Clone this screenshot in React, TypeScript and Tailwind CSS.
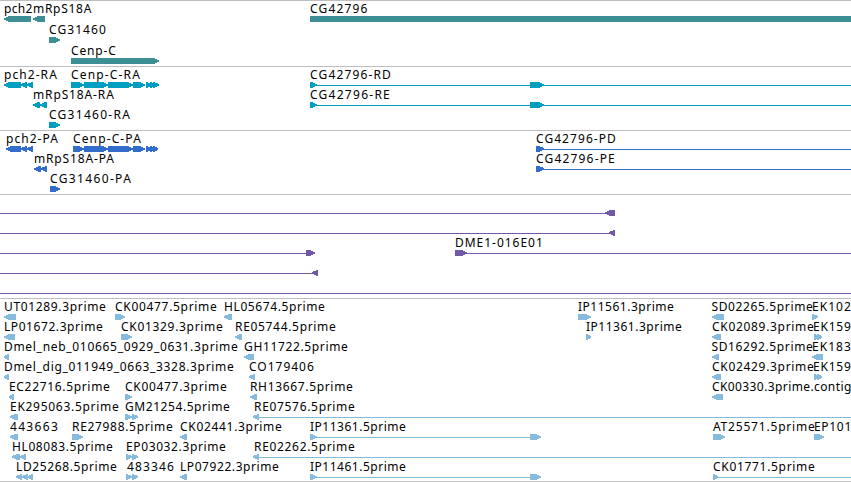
type Dir = "l" | "r" | "n";
type Glyph = [start: number, end: number, dir: Dir];
type Label = [text: string, start: number, end: number];
interface Row {
  labels?: Label[];
  lines?: [number, number][];
  glyphs?: Glyph[];
}
interface Track {
  color: string;
  rowClass: string;
  trackClass: string;
  rows: Row[];
}

const TRACKS: Track[] = [
  {
    color: "fill-[#3e8e95]",
    rowClass: "h-[21px]",
    trackClass: "h-[66px]",
    rows: [
      {
        labels: [["pch2", 4, 32.5], ["mRpS18A", 33, 91.5], ["CG42796", 310, 367.5]],
        glyphs: [[4, 31, "l"], [33, 45, "l"], [310, 851, "n"]],
      },
      { labels: [["CG31460", 49, 106]], glyphs: [[49, 60, "r"]] },
      { labels: [["Cenp-C", 71, 116]], glyphs: [[71, 159, "r"]] },
    ],
  },
  {
    color: "fill-[#009fc2]",
    rowClass: "h-5",
    trackClass: "h-16",
    rows: [
      {
        labels: [["pch2-RA", 4, 57], ["Cenp-C-RA", 71, 140], ["CG42796-RD", 310, 391]],
        lines: [[310, 851]],
        glyphs: [
          [4, 21, "l"], [21, 27, "l"], [27, 33, "l"],
          [71, 84, "r"], [84, 108, "r"], [108, 133, "r"], [133, 145, "r"],
          [146, 151, "r"], [150, 155, "r"], [153, 159, "r"],
          [310, 317, "r"], [530, 544, "r"],
        ],
      },
      {
        labels: [["mRpS18A-RA", 33, 114], ["CG42796-RE", 310, 390]],
        lines: [[310, 851]],
        glyphs: [[33, 40, "l"], [40, 47, "l"], [310, 317, "r"], [530, 544, "r"]],
      },
      { labels: [["CG31460-RA", 49, 130]], glyphs: [[49, 60, "r"]] },
    ],
  },
  {
    color: "fill-[#336dcc]",
    rowClass: "h-5",
    trackClass: "h-16",
    rows: [
      {
        labels: [["pch2-PA", 6, 58], ["Cenp-C-PA", 73, 141], ["CG42796-PD", 536, 616]],
        lines: [[536, 851]],
        glyphs: [
          [6, 21, "l"], [21, 27, "l"], [27, 33, "l"],
          [73, 84, "r"], [84, 108, "r"], [108, 133, "r"], [133, 145, "r"],
          [146, 151, "r"], [150, 155, "r"], [153, 158, "r"],
          [536, 544, "r"],
        ],
      },
      {
        labels: [["mRpS18A-PA", 34, 114], ["CG42796-PE", 536, 615]],
        lines: [[536, 851]],
        glyphs: [[34, 41, "l"], [41, 47, "l"], [536, 544, "r"]],
      },
      { labels: [["CG31460-PA", 50, 131]], glyphs: [[50, 60, "r"]] },
    ],
  },
  {
    color: "fill-[#7259a8]",
    rowClass: "h-5",
    trackClass: "h-[104px]",
    rows: [
      { lines: [[0, 608]], glyphs: [[605, 615, "l"]] },
      { lines: [[0, 612]], glyphs: [[609, 615, "l"]] },
      {
        labels: [["DME1-016E01", 455, 543]],
        lines: [[0, 308], [460, 851]],
        glyphs: [[306, 315, "r"], [455, 467, "r"]],
      },
      { lines: [[0, 314]], glyphs: [[312, 318, "l"]] },
      { lines: [[0, 851]] },
    ],
  },
  {
    color: "fill-[#87bbdd]",
    rowClass: "h-5",
    trackClass: "h-[183px]",
    rows: [
      {
        labels: [
          ["UT01289.3prime", 4, 106], ["CK00477.5prime", 115, 217], ["HL05674.5prime", 224, 325],
          ["IP11561.3prime", 578, 674], ["SD02265.5prime", 711.5, 813], ["EK102", 812, 851],
        ],
        glyphs: [[4, 16, "l"], [115, 125, "r"], [224, 232, "l"], [578, 591, "r"], [712, 724, "l"], [812, 818, "r"]],
      },
      {
        labels: [
          ["LP01672.3prime", 4, 103], ["CK01329.3prime", 121, 223], ["RE05744.5prime", 235, 336],
          ["IP11361.3prime", 586, 682], ["CK02089.3prime", 712, 814], ["EK159", 813, 851],
        ],
        glyphs: [[4, 15, "l"], [121, 132, "r"], [235, 242, "l"], [586, 591, "r"], [712, 721, "l"], [814, 819, "r"], [817, 822, "r"]],
      },
      {
        labels: [
          ["Dmel_neb_010665_0929_0631.3prime", 4, 238], ["GH11722.5prime", 244, 348],
          ["SD16292.5prime", 711.5, 813], ["EK183", 812, 851],
        ],
        glyphs: [[4, 9, "l"], [244, 254, "l"], [712, 719, "l"], [812, 823, "l"]],
      },
      {
        labels: [
          ["Dmel_dig_011949_0663_3328.3prime", 4, 234], ["CO179406", 249, 314],
          ["CK02429.3prime", 712, 814], ["EK159", 813, 851],
        ],
        glyphs: [[4, 9, "l"], [249, 255, "l"], [712, 721, "l"], [814, 819, "r"], [817, 822, "r"]],
      },
      {
        labels: [
          ["EC22716.5prime", 9, 110], ["CK00477.3prime", 125, 227], ["RH13667.5prime", 250, 353],
          ["CK00330.3prime.contig", 712, 851.5],
        ],
        glyphs: [[9, 14, "l"], [125, 132, "r"], [250, 257, "l"], [712, 723, "l"]],
      },
      {
        labels: [["EK295063.5prime", 10, 119], ["GM21254.5prime", 125, 230], ["RE07576.5prime", 254, 355]],
        lines: [[256, 851]],
        glyphs: [[10, 18, "l"], [125, 132, "r"], [132, 138, "r"], [253, 259, "l"]],
      },
      {
        labels: [
          ["443663", 10, 58], ["RE27988.5prime", 72, 173], ["CK02441.3prime", 180, 282],
          ["IP11361.5prime", 310, 406], ["AT25571.5prime", 713, 815], ["EP101", 814, 851.5],
        ],
        lines: [[310, 536]],
        glyphs: [[10, 18, "l"], [72, 83, "r"], [180, 187, "l"], [310, 317, "r"], [530, 541, "r"], [713, 725, "r"], [814, 824, "r"]],
      },
      {
        labels: [["HL08083.5prime", 12, 113], ["EP03032.3prime", 126, 226], ["RE02262.5prime", 254, 355]],
        lines: [[256, 851]],
        glyphs: [[12, 20, "l"], [20, 26, "l"], [126, 132, "r"], [132, 138, "r"], [253, 259, "l"]],
      },
      {
        labels: [
          ["LD25268.5prime", 16, 117], ["483346", 127, 174], ["LP07922.3prime", 180, 279],
          ["IP11461.5prime", 310, 406], ["CK01771.5prime", 713, 815],
        ],
        lines: [[310, 536], [713, 851]],
        glyphs: [
          [16, 22, "l"], [22, 28, "l"], [28, 33, "l"], [126, 132, "r"], [132, 138, "r"],
          [180, 187, "l"], [310, 317, "r"], [530, 541, "r"], [713, 718, "r"],
        ],
      },
    ],
  },
];

// Block with a six pixel tall body whose head narrows towards the strand direction.
function glyphPoints([start, end, dir]: Glyph): string {
  const width = end - start;
  const head = dir === "n" ? 0 : width <= 7 ? width - 1 : Math.min(6, width - 3);
  if (dir === "l") {
    const neck = start + head;
    const mid = start + head / 2;
    return `${start},17.4 ${mid},15.9 ${neck},15 ${end},15 ${end},21 ${neck},21 ${mid},20.1 ${start},18.6`;
  }
  const neck = end - head;
  const mid = end - head / 2;
  return dir === "n"
    ? `${start},15 ${end},15 ${end},21 ${start},21`
    : `${start},15 ${neck},15 ${mid},15.9 ${end},17.4 ${end},18.6 ${mid},20.1 ${neck},21 ${start},21`;
}

function FeatureRow({ row, className, color }: { row: Row; className: string; color: string }) {
  return (
    <svg className={`block w-full shrink-0 overflow-visible ${className}`}>
      <g className={color} shapeRendering="crispEdges">
        {row.lines?.map(([a, b]) => (
          <rect key={a} x={a} y={18} width={b - a} height={1} />
        ))}
        {row.glyphs?.map((glyph) => (
          <polygon key={glyph[0]} points={glyphPoints(glyph)} />
        ))}
      </g>
      {row.labels?.map(([text, start, end]) => (
        <text key={start} x={start} y={12} textLength={end - start - 0.2} className="fill-black">
          {text}
        </text>
      ))}
    </svg>
  );
}

export default function App() {
  return (
    <main className="flex h-[482px] w-[851px] flex-col overflow-hidden border-b border-[#bebebe] bg-white font-['Noto_Sans','Open_Sans',sans-serif] text-[12px]">
      {TRACKS.map((track, i) => (
        <section key={i} className={`flex shrink-0 flex-col border-t border-[#bebebe] ${track.trackClass}`}>
          {track.rows.map((row, j) => (
            <FeatureRow key={j} row={row} className={track.rowClass} color={track.color} />
          ))}
        </section>
      ))}
    </main>
  );
}
